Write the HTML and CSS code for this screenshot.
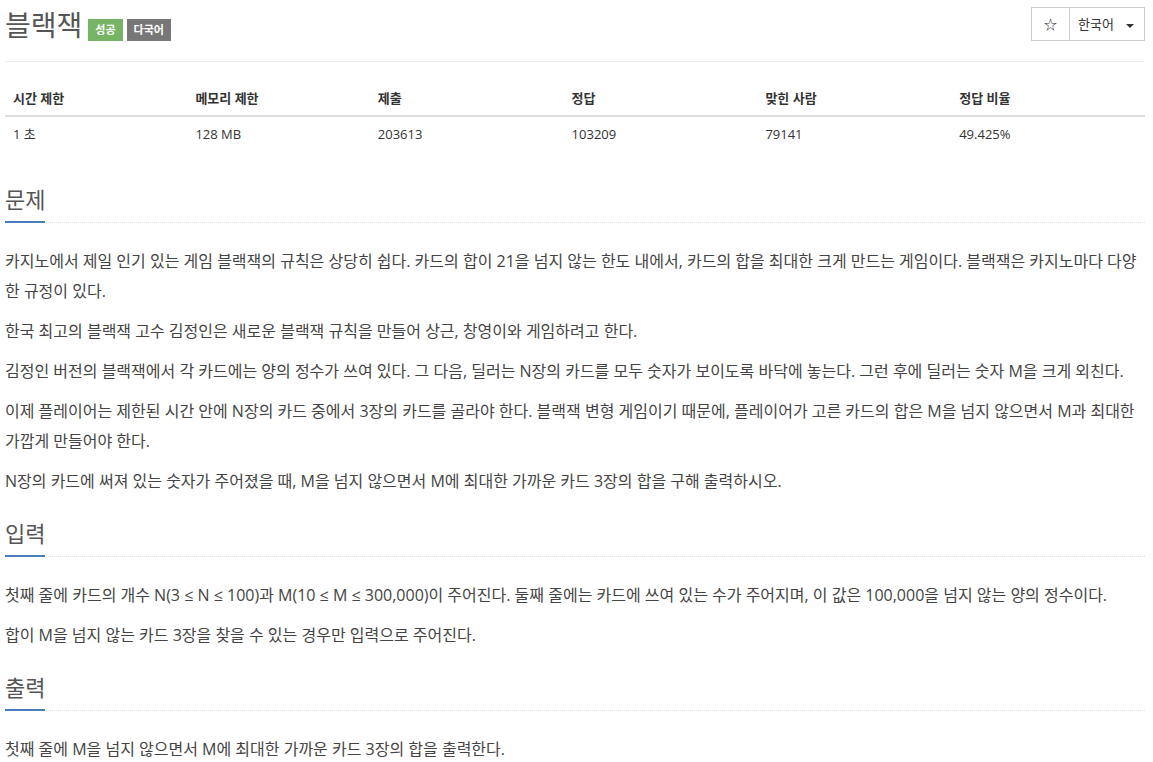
FILE: index.html
```html
<!DOCTYPE html>
<html lang="ko">
<head>
  <meta charset="UTF-8">
  <meta name="viewport" content="width=device-width, initial-scale=1.0">
  <title>블랙잭</title>
  <link rel="stylesheet" href="styles.css">
</head>
<body>
  <div class="container">
    <!-- Title -->
    <div class="page-header">
      <h1 class="title">
        <span class="title-text">블랙잭</span>
        <span class="label label-success">성공</span>
        <span class="label label-default">다국어</span>
      </h1>
      <div class="btn-group">
        <button class="btn btn-star">☆</button>
        <button class="btn btn-lang">한국어 <span class="caret"></span></button>
      </div>
    </div>

    <!-- Problem info table -->
    <table class="info-table">
      <colgroup>
        <col class="col-sm">
        <col class="col-sm">
        <col class="col-md">
        <col class="col-md">
        <col class="col-md">
        <col class="col-md">
      </colgroup>
      <thead>
        <tr>
          <th>시간 제한</th>
          <th>메모리 제한</th>
          <th>제출</th>
          <th>정답</th>
          <th>맞힌 사람</th>
          <th>정답 비율</th>
        </tr>
      </thead>
      <tbody>
        <tr>
          <td>1 초</td>
          <td>128 MB</td>
          <td>203613</td>
          <td>103209</td>
          <td>79141</td>
          <td>49.425%</td>
        </tr>
      </tbody>
    </table>

    <!-- Description -->
    <section class="problem-section">
      <div class="headline"><h2>문제</h2></div>
      <div class="problem-text">
        <p>카지노에서 제일 인기 있는 게임 블랙잭의 규칙은 상당히 쉽다. 카드의 합이 21을 넘지 않는 한도 내에서, 카드의 합을 최대한 크게 만드는 게임이다. 블랙잭은 카지노마다 다양한 규정이 있다.</p>
        <p>한국 최고의 블랙잭 고수 김정인은 새로운 블랙잭 규칙을 만들어 상근, 창영이와 게임하려고 한다.</p>
        <p>김정인 버전의 블랙잭에서 각 카드에는 양의 정수가 쓰여 있다. 그 다음, 딜러는 N장의 카드를 모두 숫자가 보이도록 바닥에 놓는다. 그런 후에 딜러는 숫자 M을 크게 외친다.</p>
        <p>이제 플레이어는 제한된 시간 안에 N장의 카드 중에서 3장의 카드를 골라야 한다. 블랙잭 변형 게임이기 때문에, 플레이어가 고른 카드의 합은 M을 넘지 않으면서 M과 최대한 가깝게 만들어야 한다.</p>
        <p>N장의 카드에 써져 있는 숫자가 주어졌을 때, M을 넘지 않으면서 M에 최대한 가까운 카드 3장의 합을 구해 출력하시오.</p>
      </div>
    </section>

    <!-- Input -->
    <section class="problem-section">
      <div class="headline"><h2>입력</h2></div>
      <div class="problem-text">
        <p>첫째 줄에 카드의 개수 N(3 ≤ N ≤ 100)과 M(10 ≤ M ≤ 300,000)이 주어진다. 둘째 줄에는 카드에 쓰여 있는 수가 주어지며, 이 값은 100,000을 넘지 않는 양의 정수이다.</p>
        <p>합이 M을 넘지 않는 카드 3장을 찾을 수 있는 경우만 입력으로 주어진다.</p>
      </div>
    </section>

    <!-- Output -->
    <section class="problem-section">
      <div class="headline"><h2>출력</h2></div>
      <div class="problem-text">
        <p>첫째 줄에 M을 넘지 않으면서 M에 최대한 가까운 카드 3장의 합을 출력한다.</p>
      </div>
    </section>
  </div>
</body>
</html>
```

FILE: styles.css
```css
body {
  font-family: "Open Sans", "Noto Sans CJK KR", sans-serif;
  color: #333;
  background: #fff;
  margin: 0;
  padding: 0;
}

.container {
  padding: 0 8px 0 5px;
}

.page-header {
  display: flex;
  justify-content: space-between;
  align-items: flex-start;
  padding-top: 7px;
  height: 54px;
  border-bottom: 1px solid #eee;
  margin-bottom: 19px;
}

.title {
  display: flex;
  align-items: center;
  margin: 0;
  font-weight: normal;
}

.title-text {
  font-size: 28px;
  line-height: 36px;
  color: #555;
  margin-right: 6px;
}

.label {
  margin-top: 9px;
  font-size: 11px;
  font-weight: bold;
  line-height: 12px;
  padding: 5px 7px;
  color: #fff;
  margin-right: 4px;
}

.label-success {
  background-color: #78b466;
}

.label-default {
  background-color: #777;
}

.btn-group {
  display: flex;
}

.btn {
  font-family: inherit;
  font-size: 13px;
  line-height: 20px;
  color: #333;
  background: #fff;
  border: 1px solid #ccc;
  padding: 6px 12px;
  height: 34px;
  cursor: pointer;
}

.btn-star {
  width: 39px;
  padding: 6px 0;
}

.btn-lang {
  width: 76px;
  margin-left: -1px;
  padding: 6px 8px;
  text-align: left;
}

.caret {
  display: inline-block;
  width: 0;
  height: 0;
  margin-left: 9px;
  vertical-align: middle;
  border-top: 4px solid #333;
  border-left: 4px solid transparent;
  border-right: 4px solid transparent;
}

.info-table {
  width: 100%;
  border-collapse: collapse;
  font-size: 13px;
  margin-bottom: 32px;
}

.col-sm {
  width: 16%;
}

.col-md {
  width: 17%;
}

.info-table th,
.info-table td {
  padding: 8px;
  line-height: 18px;
  text-align: left;
}

.info-table th {
  border-bottom: 2px solid #ddd;
  font-weight: bold;
}

.headline {
  border-bottom: 1px dotted #ddd;
  margin: 21px 0 23px;
}

.headline h2 {
  display: inline-block;
  margin: 0 0 -1px;
  padding-bottom: 5px;
  border-bottom: 2px solid #4a7cc0;
  font-size: 22px;
  font-weight: normal;
  line-height: 33px;
  color: #555;
}

.problem-text {
  font-size: 16px;
  line-height: 30px;
  color: #444;
}

.problem-text p {
  margin: 0 0 10px;
}
```
